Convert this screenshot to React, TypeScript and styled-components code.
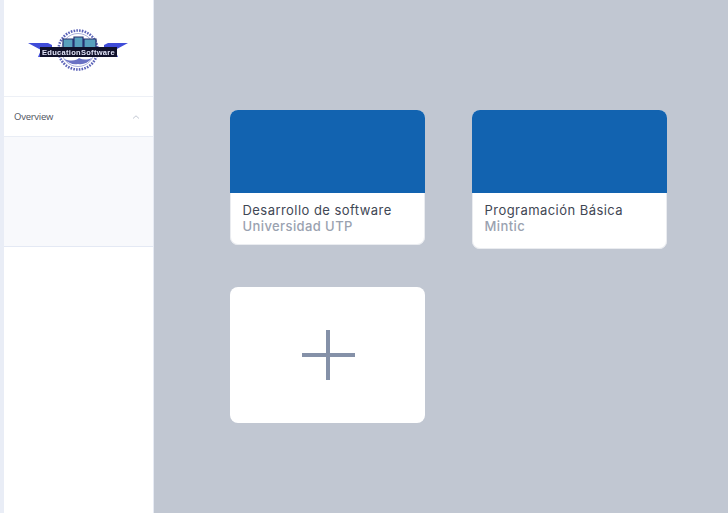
import React from "react";
import styled, { createGlobalStyle } from "styled-components";

const GlobalStyle = createGlobalStyle`
  html, body {
    margin: 0;
    padding: 0;
    height: 100%;
    overflow: hidden;
  }
  body {
    font-family: "Inter", "Liberation Sans", sans-serif;
  }
`;

const Page = styled.div`
  display: flex;
  width: 728px;
  height: 513px;
  background: #c1c7d2;
`;

const Edge = styled.div`
  width: 4px;
  flex-shrink: 0;
  background: #e9edf6;
`;

const Sidebar = styled.aside`
  width: 150px;
  flex-shrink: 0;
  display: flex;
  flex-direction: column;
  background: #ffffff;
  border-right: 1px solid #e6eaf3;
  box-sizing: border-box;
`;

const LogoBox = styled.div`
  height: 97px;
  display: flex;
  align-items: center;
  justify-content: center;
  border-bottom: 1px solid #edf0f6;
  box-sizing: border-box;
  padding: 4px 2px 0 0;
`;

const LogoArt = styled.svg`
  filter: blur(0.5px);
`;

const MenuRow = styled.div`
  height: 40px;
  display: flex;
  align-items: center;
  justify-content: space-between;
  padding: 0 13px 0 10px;
  border-bottom: 1px solid #e9edf5;
  box-sizing: border-box;
`;

const MenuLabel = styled.span`
  font-family: "Open Sans", sans-serif;
  font-size: 9.5px;
  letter-spacing: -0.25px;
  color: #50555f;
`;

const SubMenu = styled.div`
  height: 110px;
  background: #f8f9fc;
  border-bottom: 1px solid #e4e9f4;
  box-sizing: border-box;
`;

const Main = styled.main`
  flex: 1;
  display: grid;
  grid-template-columns: repeat(2, 195px);
  grid-auto-rows: min-content;
  column-gap: 47px;
  row-gap: 38px;
  align-items: start;
  padding: 110px 0 0 76px;
`;

const Card = styled.div<{ $pad: number }>`
  display: flex;
  flex-direction: column;
  background: #ffffff;
  border-radius: 8px;
  overflow: hidden;
  padding-bottom: ${(p) => p.$pad}px;
  box-shadow: 0 0 0 1px rgba(220, 223, 230, 0.6) inset;
`;

const Banner = styled.div`
  height: 83px;
  background: #1263b0;
`;

const CardBody = styled.div`
  padding: 9px 12.5px 0;
`;

const Title = styled.div`
  font-size: 13px;
  line-height: 16px;
  letter-spacing: 0.45px;
  color: #3f4754;
`;

const Subtitle = styled.div`
  font-size: 13px;
  line-height: 16px;
  letter-spacing: 0.4px;
  font-weight: 500;
  color: #9aa2b0;
`;

const AddCard = styled.div`
  height: 136px;
  display: flex;
  align-items: center;
  justify-content: center;
  background: #ffffff;
  border-radius: 8px;
`;

const PlusArt = styled.svg`
  margin: 0 0 0 1px;
`;

const Logo = () => (
  <LogoArt width="104" height="44" viewBox="0 0 104 44">
    <circle cx="52" cy="22" r="19.5" fill="none" stroke="#5b63b8" strokeWidth="2.6" strokeDasharray="1.6 1.2" />
    <circle cx="52" cy="22" r="16.5" fill="#ffffff" stroke="#8a90cc" strokeWidth="0.7" />
    <path d="M37 11h10v9H37zM48 9h9v11h-9zM58 11h12v9H58z" fill="#58a0bd" stroke="#26306e" strokeWidth="1.2" />
    <path d="M2 15h20l4 2v12H12l3-7z" fill="#3f4cd8" />
    <path d="M102 15H82l-4 2v12h14l-3-7z" fill="#3f4cd8" />
    <rect x="14" y="19" width="77" height="10" fill="#10112a" />
    <text x="52.5" y="26.6" textAnchor="middle" fontFamily="Liberation Sans, sans-serif" fontSize="7.5" fontWeight="700" letterSpacing="0.3" fill="#e2e4f8">
      EducationSoftware
    </text>
    <path d="M38 31c8 3 13 1 15-1 4 2 8 2 13 0-4 5-9 7-14 6-5 1-10-1-14-5z" fill="#6a72c4" />
  </LogoArt>
);

const Chevron = () => (
  <svg width="8" height="6" viewBox="0 0 8 6">
    <path d="M1 4.5 4 1.8 7 4.5" fill="none" stroke="#c3c9d4" strokeWidth="1" />
  </svg>
);

const Plus = () => (
  <PlusArt width="53" height="50" viewBox="0 0 53 50">
    <rect x="24" y="0" width="4" height="50" fill="#8591a8" />
    <rect x="0" y="23" width="53" height="4" fill="#8591a8" />
  </PlusArt>
);

const courses = [
  { title: "Desarrollo de software", org: "Universidad UTP", pad: 11 },
  { title: "Programación Básica", org: "Mintic", pad: 15 },
];

export default function App() {
  return (
    <Page>
      <GlobalStyle />
      <Edge />
      <Sidebar>
        <LogoBox>
          <Logo />
        </LogoBox>
        <MenuRow>
          <MenuLabel>Overview</MenuLabel>
          <Chevron />
        </MenuRow>
        <SubMenu />
      </Sidebar>
      <Main>
        {courses.map((c) => (
          <Card key={c.title} $pad={c.pad}>
            <Banner />
            <CardBody>
              <Title>{c.title}</Title>
              <Subtitle>{c.org}</Subtitle>
            </CardBody>
          </Card>
        ))}
        <AddCard>
          <Plus />
        </AddCard>
      </Main>
    </Page>
  );
}
